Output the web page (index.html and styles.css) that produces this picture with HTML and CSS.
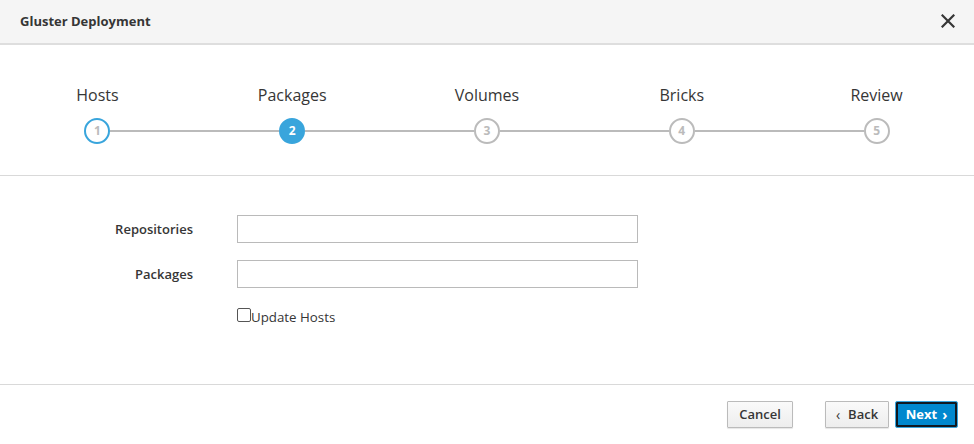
FILE: index.html
```html
<!DOCTYPE html>
<html>
<head>
<meta charset="utf-8">
<link rel="stylesheet" href="styles.css">
</head>
<body>
<div class="modal">
  <header class="modal-header">
    <h1 class="modal-title">Gluster Deployment</h1>
    <button class="close" aria-label="Close">
      <svg width="14" height="14" viewBox="0 0 14 14"><path d="M1.5 1.5 L12.5 12.5 M12.5 1.5 L1.5 12.5" stroke="#363636" stroke-width="2.2" stroke-linecap="square"/></svg>
    </button>
  </header>

  <section class="steps">
    <div class="step done first">
      <div class="step-label">Hosts</div>
      <div class="step-track"><span class="seg"></span><span class="circle">1</span><span class="seg"></span></div>
    </div>
    <div class="step current">
      <div class="step-label">Packages</div>
      <div class="step-track"><span class="seg"></span><span class="circle">2</span><span class="seg"></span></div>
    </div>
    <div class="step">
      <div class="step-label">Volumes</div>
      <div class="step-track"><span class="seg"></span><span class="circle">3</span><span class="seg"></span></div>
    </div>
    <div class="step">
      <div class="step-label">Bricks</div>
      <div class="step-track"><span class="seg"></span><span class="circle">4</span><span class="seg"></span></div>
    </div>
    <div class="step last">
      <div class="step-label">Review</div>
      <div class="step-track"><span class="seg"></span><span class="circle">5</span><span class="seg"></span></div>
    </div>
  </section>

  <section class="form-body">
    <div class="form-grid">
      <label class="form-label">Repositories</label>
      <input class="form-control" type="text">
      <label class="form-label">Packages</label>
      <input class="form-control" type="text">
      <span></span>
      <label class="check"><span class="checkbox"></span>Update Hosts</label>
    </div>
  </section>

  <footer class="modal-footer">
    <button class="btn cancel">Cancel</button>
    <button class="btn back"><span class="chev">‹</span>Back</button>
    <button class="btn primary">Next<span class="chev">›</span></button>
  </footer>
</div>
</body>
</html>
```

FILE: styles.css
```css
* { box-sizing: border-box; }
html, body { margin: 0; padding: 0; background: #fff; }
body {
  font-family: "Open Sans", "Liberation Sans", sans-serif;
  color: #363636;
  width: 974px;
  height: 444px;
  overflow: hidden;
}
.modal { width: 974px; }

.modal-header {
  height: 45px;
  background: #f5f5f5;
  border-bottom: 2px solid #dedede;
  display: flex;
  align-items: center;
  justify-content: space-between;
  padding: 0 19px 0 20px;
}
.modal-title {
  margin: 0;
  font-size: 13px;
  font-weight: 700;
  color: #363636;
  line-height: 18px;
  padding-bottom: 2px;
}
.close {
  border: 0;
  background: none;
  padding: 0;
  width: 14px;
  height: 14px;
  display: flex;
  margin-bottom: 2px;
}

.steps {
  display: grid;
  grid-template-columns: repeat(5, 1fr);
  padding-top: 39px;
  height: 131px;
  border-bottom: 1px solid #d9d9d9;
}
.step {
  display: flex;
  flex-direction: column;
  align-items: center;
}
.step-label {
  font-size: 16px;
  line-height: 22px;
  color: #363636;
}
.step-track {
  margin-top: 12px;
  width: 100%;
  display: flex;
  align-items: center;
}
.seg {
  flex: 1;
  height: 2px;
  background: #bbb;
}
.first .seg:first-child, .last .seg:last-child { background: transparent; }
.circle {
  width: 26px;
  height: 26px;
  border-radius: 50%;
  border: 2px solid #bbb;
  background: #fff;
  color: #bbb;
  font-size: 12px;
  font-weight: 700;
  display: flex;
  align-items: center;
  justify-content: center;
  line-height: 1;
}
.done .circle { border-color: #39a5dc; }
.current .circle { background: #39a5dc; border-color: #39a5dc; color: #fff; }

.form-body {
  height: 209px;
  padding-top: 39px;
  border-bottom: 1px solid #d9d9d9;
}
.form-grid {
  display: grid;
  grid-template-columns: 193px 401px;
  column-gap: 44px;
  row-gap: 17px;
  align-items: center;
}
.form-label {
  text-align: right;
  font-size: 13px;
  font-weight: 600;
  color: #363636;
}
.form-control {
  height: 28px;
  border: 1px solid #bababa;
  background: #fff;
  margin: 0;
  padding: 2px 6px;
  font: inherit;
}
.check {
  display: flex;
  align-items: center;
  font-size: 13.3px;
  margin-top: 2px;
  line-height: 20px;
}
.checkbox {
  width: 14px;
  height: 14px;
  border: 1px solid #555;
  border-radius: 2px;
  background: #fff;
  margin-top: -5px;
}

.modal-footer {
  display: flex;
  justify-content: flex-end;
  align-items: flex-start;
  padding: 16px 16px 0 0;
}
.btn {
  font-family: inherit;
  font-size: 13px;
  font-weight: 600;
  color: #363636;
  height: 27px;
  border: 1px solid #bbb;
  border-radius: 1px;
  background: linear-gradient(#fafafa, #ededed);
  padding: 0 12px;
  margin: 0;
  line-height: 1;
  box-shadow: 0 1px 1px rgba(3,3,3,0.1);
  display: flex;
  align-items: center;
}
.cancel { width: 66px; justify-content: center; }
.back { margin-left: 32px; width: 64px; justify-content: center; padding: 0; }
.back .chev { margin-right: 8px; font-weight: 400; font-size: 14px; }
.primary {
  margin-left: 6px;
  width: 63px;
  justify-content: center;
  padding: 0;
  background: #0088ce;
  color: #fff;
  border: 1px solid #39a5dc;
  border-radius: 2px;
  box-shadow: inset 0 0 0 2px #101820;
  font-weight: 700;
}
.primary .chev { margin-left: 5px; font-weight: 700; font-size: 14px; }
```
